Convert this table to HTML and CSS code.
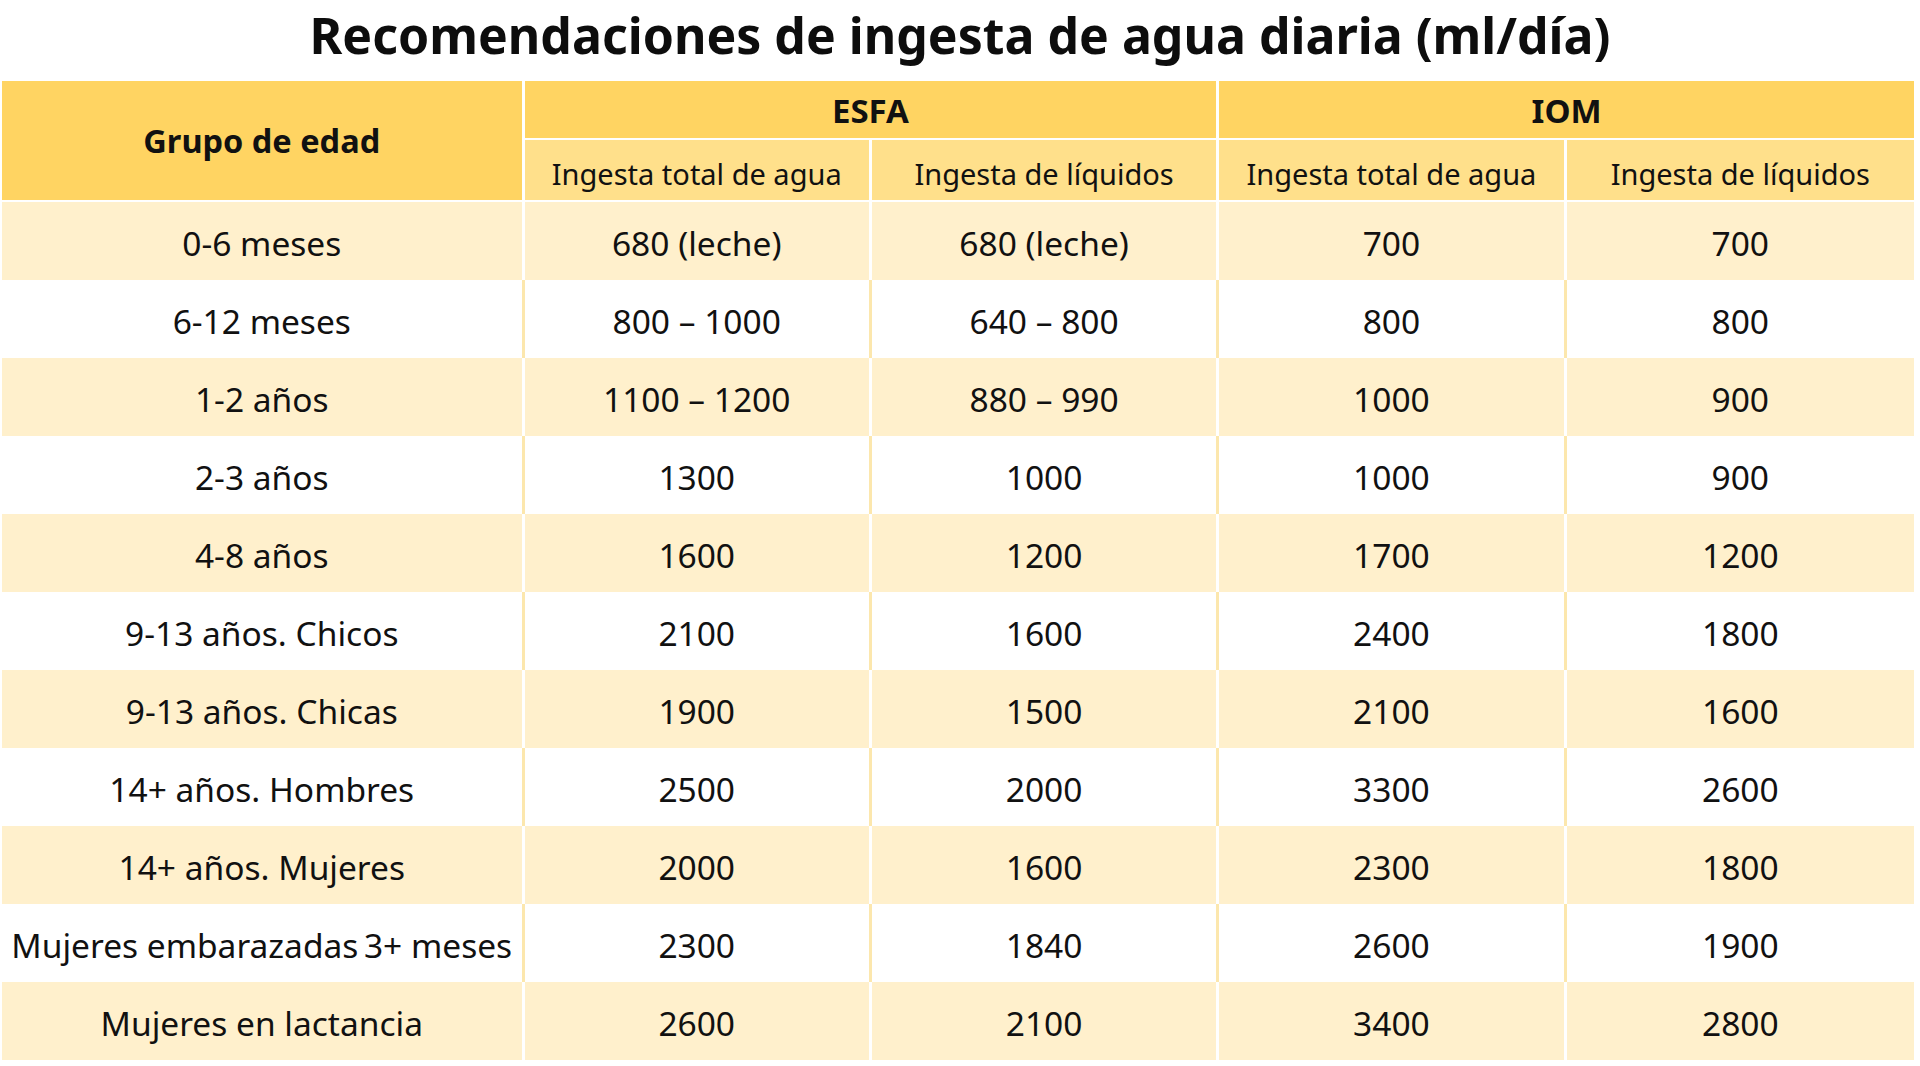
FILE: index.html
```html
<!DOCTYPE html>
<html lang="es">
<head>
<meta charset="utf-8">
<title>Recomendaciones de ingesta de agua diaria</title>
<link rel="stylesheet" href="styles.css">
</head>
<body>
<h1 class="title">Recomendaciones de ingesta de agua diaria (ml/día)</h1>
<table class="intake">
  <colgroup>
    <col class="c-group">
    <col class="c-val">
    <col class="c-val">
    <col class="c-val">
    <col class="c-val">
  </colgroup>
  <thead>
    <tr class="h1row">
      <th rowspan="2" class="group-head">Grupo de edad</th>
      <th colspan="2" class="org">ESFA</th>
      <th colspan="2" class="org last">IOM</th>
    </tr>
    <tr class="h2row">
      <th class="sub">Ingesta total de agua</th>
      <th class="sub">Ingesta de líquidos</th>
      <th class="sub">Ingesta total de agua</th>
      <th class="sub last">Ingesta de líquidos</th>
    </tr>
  </thead>
  <tbody>
    <tr class="odd"><td>0-6 meses</td><td>680 (leche)</td><td>680 (leche)</td><td>700</td><td class="last">700</td></tr>
    <tr class="even"><td>6-12 meses</td><td>800 – 1000</td><td>640 – 800</td><td>800</td><td class="last">800</td></tr>
    <tr class="odd"><td>1-2 años</td><td>1100 – 1200</td><td>880 – 990</td><td>1000</td><td class="last">900</td></tr>
    <tr class="even"><td>2-3 años</td><td>1300</td><td>1000</td><td>1000</td><td class="last">900</td></tr>
    <tr class="odd"><td>4-8 años</td><td>1600</td><td>1200</td><td>1700</td><td class="last">1200</td></tr>
    <tr class="even"><td>9-13 años. Chicos</td><td>2100</td><td>1600</td><td>2400</td><td class="last">1800</td></tr>
    <tr class="odd"><td>9-13 años. Chicas</td><td>1900</td><td>1500</td><td>2100</td><td class="last">1600</td></tr>
    <tr class="even"><td>14+ años. Hombres</td><td>2500</td><td>2000</td><td>3300</td><td class="last">2600</td></tr>
    <tr class="odd"><td>14+ años. Mujeres</td><td>2000</td><td>1600</td><td>2300</td><td class="last">1800</td></tr>
    <tr class="even"><td>Mujeres embarazadas&#8239;3+ meses</td><td>2300</td><td>1840</td><td>2600</td><td class="last">1900</td></tr>
    <tr class="odd"><td>Mujeres en lactancia</td><td>2600</td><td>2100</td><td>3400</td><td class="last">2800</td></tr>
  </tbody>
</table>
</body>
</html>
```
FILE: styles.css
```css
html, body {
  margin: 0;
  padding: 0;
  background: #ffffff;
}
body {
  font-family: "Noto Sans", Lato, sans-serif;
  color: #111111;
}
.title {
  margin: 0;
  height: 81px;
  line-height: 70px;
  text-align: center;
  font-size: 50px;
  font-weight: 700;
  color: #0d0d0d;
}
.intake {
  margin-left: 2px;
  width: 1912px;
  border-collapse: separate;
  border-spacing: 0;
  table-layout: fixed;
}
.c-group { width: 522px; }
.c-val { width: 347px; }
.intake th,
.intake td {
  padding: 0;
  text-align: center;
  vertical-align: middle;
  box-sizing: border-box;
  line-height: 1.2;
}
.intake th {
  border-right: 3px solid #ffffff;
}
.intake th.last { border-right: none; }
.group-head {
  background: #ffd462;
  font-size: 32.5px;
  font-weight: 700;
  border-bottom: 2px solid #ffffff;
}
.group-head {
  padding-top: 12px;
}
.h1row th.org {
  height: 59px;
  background: #ffd462;
  font-size: 33px;
  font-weight: 700;
  border-bottom: 2px solid #ffffff;
  padding-top: 2px;
}
.h2row th.sub {
  height: 62px;
  background: #ffe08b;
  font-size: 29px;
  font-weight: 400;
  border-bottom: 2px solid #ffffff;
  padding-top: 9px;
}
.intake td {
  height: 78px;
  font-size: 33.5px;
  border-right: 3px solid #ffffff;
  padding-top: 4px;
}
.intake td.last { border-right: none; }
.odd td { background: #fff0cc; }
.even td {
  background: #ffffff;
  border-right-color: #fce7ad;
}
.even td.last { border-right: none; }
```
